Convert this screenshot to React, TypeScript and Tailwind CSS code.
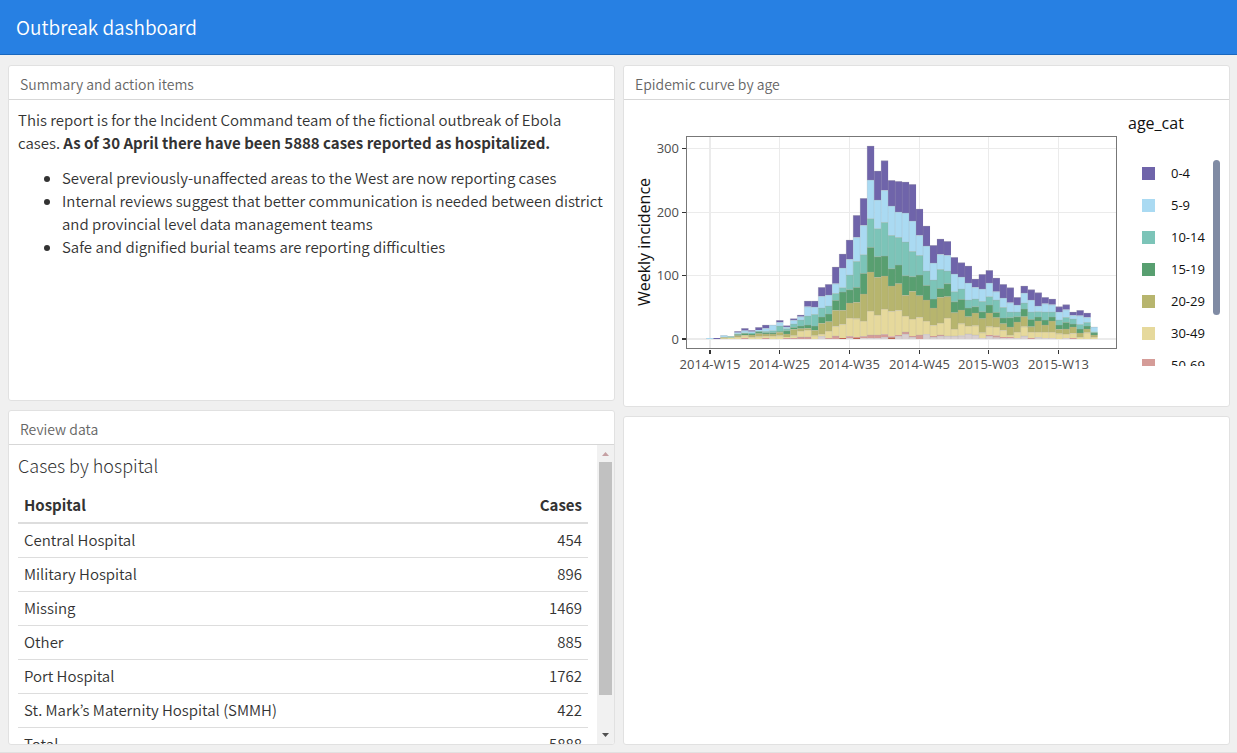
import type { ReactNode } from "react";

const hospitals: [string, number][] = [
  ["Central Hospital", 454],
  ["Military Hospital", 896],
  ["Missing", 1469],
  ["Other", 885],
  ["Port Hospital", 1762],
  ["St. Mark’s Maternity Hospital (SMMH)", 422],
  ["Total", 5888],
];

const GREY = "#d8cfd0";
const PINK = "#d59c98";
const RUST = "#bf6350";

const legend: [string, string][] = [
  ["0-4", "bg-[#6f64aa]"],
  ["5-9", "bg-[#aadaf2]"],
  ["10-14", "bg-[#7cc4b8]"],
  ["15-19", "bg-[#589f70]"],
  ["20-29", "bg-[#b7b56e]"],
  ["30-49", "bg-[#e6d99c]"],
  ["50-69", "bg-[#d59c98]"],
];

const layers = ["#6f64aa", "#aadaf2", "#7cc4b8", "#589f70", "#b7b56e", "#e6d99c"];

// One row per week: upper edge of each age group, then the oldest groups.
// Edges are in thirds of a unit, measured downwards; BASE is zero cases.
const BASE = 627;
type Week = { e: number[]; old?: [number, string][] };
const weeks: Week[] = [
  { e: [624, 624, 627] },
  { e: [624] },
  { e: [616, 616, 621, 622, 622, 626] },
  { e: [619, 619, 619, 623, 623, 624] },
  { e: [604, 608, 611, 613, 617, 621] },
  { e: [595, 602, 608, 610, 615, 617], old: [[624, PINK]] },
  { e: [601, 605, 609, 612, 615, 621] },
  { e: [592, 600, 603, 605, 611, 620] },
  { e: [585, 595, 604, 608, 612, 618], old: [[624, PINK]] },
  { e: [585, 585, 602, 608, 612, 618] },
  { e: [571, 577, 588, 604, 607, 617] },
  { e: [587, 591, 596, 602, 612, 621], old: [[624, PINK]] },
  { e: [566, 571, 582, 592, 598, 617], old: [[624, PINK]] },
  { e: [555, 560, 570, 588, 596, 603], old: [[621, PINK]] },
  { e: [513, 530, 558, 585, 595, 600], old: [[621, PINK]] },
  { e: [513, 531, 553, 588, 601, 617] },
  { e: [472, 499, 534, 561, 580, 612], old: [[619, GREY]] },
  { e: [463, 495, 528, 552, 575, 603], old: [[624, PINK]] },
  { e: [411, 461, 490, 511, 541, 589], old: [[618, PINK]] },
  { e: [372, 414, 473, 486, 541, 583], old: [[624, RUST]] },
  { e: [330, 388, 435, 479, 519, 564], old: [[619, PINK], [624, GREY]] },
  { e: [256, 322, 394, 472, 517, 566], old: [[621, PINK], [624, RUST]] },
  { e: [205, 286, 374, 430, 492, 573], old: [[619, PINK], [625, GREY]] },
  { e: [48, 150, 266, 352, 426, 543], old: [[615, PINK], [624, GREY]] },
  { e: [123, 210, 296, 380, 442, 555], old: [[615, PINK], [624, GREY]] },
  { e: [92, 181, 277, 378, 438, 537], old: [[613, PINK], [622, GREY]] },
  { e: [151, 228, 316, 416, 468, 544], old: [[619, PINK], [622, RUST]] },
  { e: [154, 246, 322, 405, 461, 541], old: [[615, PINK], [618, GREY]] },
  { e: [156, 249, 336, 437, 496, 558], old: [[606, PINK], [612, GREY]] },
  { e: [163, 273, 364, 440, 484, 567], old: [[618, PINK], [621, GREY]] },
  { e: [237, 316, 376, 435, 497, 562], old: [[615, PINK]] },
  { e: [288, 348, 423, 466, 510, 573], old: [[613, GREY]] },
  { e: [346, 399, 450, 507, 534, 586], old: [[618, PINK], [621, GREY]] },
  { e: [327, 373, 418, 475, 502, 579], old: [[615, PINK], [619, GREY]] },
  { e: [334, 376, 423, 461, 500, 564], old: [[618, GREY]] },
  { e: [382, 432, 485, 515, 548, 597], old: [[618, GREY]] },
  { e: [398, 441, 477, 508, 540, 581], old: [[617, GREY]] },
  { e: [408, 459, 510, 534, 560, 588], old: [[612, GREY]] },
  { e: [447, 472, 507, 530, 549, 587], old: [[615, GREY]] },
  { e: [433, 477, 514, 545, 566, 608], old: [[624, GREY]] },
  { e: [421, 459, 500, 525, 549, 590], old: [[615, PINK], [618, GREY]] },
  { e: [444, 485, 510, 547, 563, 591], old: [[617, PINK], [623, GREY]] },
  { e: [463, 504, 532, 564, 581, 601], old: [[621, PINK], [624, GREY]] },
  { e: [473, 518, 546, 563, 591, 615], old: [[621, PINK], [624, GREY]] },
  { e: [502, 525, 546, 560, 576, 606], old: [[624, GREY]] },
  { e: [468, 489, 519, 537, 560, 590], old: [[618, GREY]] },
  { e: [479, 510, 546, 568, 590, 606], old: [[624, PINK]] },
  { e: [488, 528, 545, 561, 573, 606], old: [[622, GREY]] },
  { e: [502, 521, 546, 570, 585, 606], old: [[624, GREY]] },
  { e: [507, 524, 546, 561, 573, 606], old: [[624, GREY]] },
  { e: [530, 546, 570, 585, 598, 611] },
  { e: [524, 539, 562, 577, 597, 612], old: [[624, GREY]] },
  { e: [546, 556, 567, 582, 591, 610], old: [[624, PINK]] },
  { e: [541, 557, 583, 597, 609, 621] },
  { e: [549, 562, 577, 588, 597, 608] },
  { e: [591, 591, 605, 608, 615, 621] },
];

const BAR = 6.985;
const LEFT = 82.5;
const TOP = 30;

function EpiBars() {
  return (
    <g>
      {weeks.map((week, i) => {
        const x = LEFT + i * BAR;
        const bands: [number, string][] = [
          ...week.e.map((y, k): [number, string] => [y, layers[k]]),
          ...(week.old ?? []),
        ];
        return bands.map(([y, fill], k) => {
          const next = k + 1 < bands.length ? bands[k + 1][0] : BASE;
          const h = (next - y) / 3;
          if (h <= 0) return null;
          return (
            <g key={`${i}-${k}`}>
              <rect x={x} y={TOP + y / 3} width={BAR} height={h} fill={fill} />
              {h > 1 && (
                <path
                  d={`M${x} ${TOP + y / 3 + 0.2}h${BAR}`}
                  stroke="#a9a9a9"
                  strokeOpacity={0.45}
                  strokeWidth={0.7}
                />
              )}
              <path
                d={`M${x} ${TOP + y / 3}v${h}`}
                stroke="#909090"
                strokeOpacity={0.3}
                strokeWidth={0.6}
              />
            </g>
          );
        });
      })}
    </g>
  );
}

const xTicks: [number, string][] = [
  [86, "2014-W15"],
  [155.5, "2014-W25"],
  [225.5, "2014-W35"],
  [295.5, "2014-W45"],
  [364.5, "2015-W03"],
  [434.5, "2015-W13"],
];
const yTicks: [number, string][] = [
  [48.5, "300"],
  [112.5, "200"],
  [175.5, "100"],
  [239, "0"],
];

function EpiCurve() {
  return (
    <svg
      viewBox="0 0 494 290"
      className="h-[290px] w-[494px] shrink-0"
      fontFamily="'Open Sans', sans-serif"
      role="img"
      aria-label="Weekly incidence by age category"
    >
      {xTicks.map(([x, label], i) => (
        <g key={label}>
          <path d={`M${x} 37V248`} stroke="#ebebeb" strokeWidth={i === 0 ? 2 : 1} />
          <path d={`M${x} 250v4`} stroke="#333" strokeWidth={i === 0 ? 2 : 1} />
          <text x={x} y={269} fontSize={13} fill="#4d4d4d" textAnchor="middle">
            {label}
          </text>
        </g>
      ))}
      {yTicks.map(([y, label], i) => (
        <g key={label}>
          <path d={`M63 ${y}H492`} stroke="#ebebeb" strokeWidth={i === 3 ? 2 : 1} />
          <path d={`M58 ${y}h4`} stroke="#333" strokeWidth={i === 3 ? 2 : 1} />
          <text x={55} y={y + 4.5} fontSize={13} fill="#4d4d4d" textAnchor="end">
            {label}
          </text>
        </g>
      ))}
      <EpiBars />
      <rect x={62.5} y={36.5} width={430} height={212} fill="none" stroke="#777" />
      <text
        transform="translate(26 142) rotate(-90)"
        fontSize={16}
        fill="#111"
        textAnchor="middle"
      >
        Weekly incidence
      </text>
    </svg>
  );
}

function Card({
  title,
  className,
  children,
}: {
  title?: string;
  className: string;
  children?: ReactNode;
}) {
  return (
    <section
      className={`flex min-h-0 flex-col overflow-hidden rounded-[3px] border border-[#e1e1e1] bg-white ${className}`}
    >
      {title && (
        <h2 className="h-[34px] shrink-0 border-b border-[#d7d7d7] px-[11px] pt-1 text-[14px] leading-[28px] text-[#666]">
          {title}
        </h2>
      )}
      {children}
    </section>
  );
}

export default function App() {
  return (
    <div className="flex h-screen flex-col border-b border-[#e1e1e1] bg-[#f0f0f0] font-['Noto_Sans_CJK_KR',sans-serif] text-[15px] leading-[23px] font-[350] text-[#333]">
      <header className="h-[55px] shrink-0 border-b border-[#1967be] bg-[#2780e3] px-4">
        <h1 className="text-[19px] leading-[54px] font-[350] text-white">Outbreak dashboard</h1>
      </header>

      <main className="flex min-h-0 flex-1 gap-2 pt-[10px] pr-[7px] pb-[7px] pl-2">
        <div className="flex min-w-0 flex-1 flex-col gap-[9px]">
          <Card title="Summary and action items" className="flex-[336]">
            <div className="px-[9px] pt-2">
              <p>
                This report is for the Incident Command team of the fictional outbreak of Ebola
                cases.{" "}
                <strong className="font-bold">
                  As of 30 April there have been 5888 cases reported as hospitalized.
                </strong>
              </p>
              <ul className="mt-3 list-disc pl-11">
                <li>Several previously-unaffected areas to the West are now reporting cases</li>
                <li>
                  Internal reviews suggest that better communication is needed between district and
                  provincial level data management teams
                </li>
                <li>Safe and dignified burial teams are reporting difficulties</li>
              </ul>
            </div>
          </Card>

          <Card title="Review data" className="flex-[335]">
            <div className="flex min-h-0 flex-1">
              <div className="min-w-0 flex-1 overflow-hidden pr-[9px] pl-[9px]">
                <h3 className="pt-[10px] text-[18px] leading-[21px] font-light">
                  Cases by hospital
                </h3>
                <table className="mt-3 w-full">
                  <thead>
                    <tr className="h-[35px] border-b-2 border-[#ddd]">
                      <th className="px-1.5 pb-0.5 text-left font-bold">Hospital</th>
                      <th className="px-1.5 pb-0.5 text-right font-bold">Cases</th>
                    </tr>
                  </thead>
                  <tbody>
                    {hospitals.map(([name, cases]) => (
                      <tr key={name} className="h-[34px] border-b border-[#ddd]">
                        <td className="px-1.5 pb-0.5">{name}</td>
                        <td className="px-1.5 pb-0.5 text-right">{cases}</td>
                      </tr>
                    ))}
                  </tbody>
                </table>
              </div>
              <div
                className="flex w-[17px] shrink-0 flex-col items-center bg-[#f1f1f1]"
                aria-hidden="true"
              >
                <svg viewBox="0 0 17 17" className="size-[17px] shrink-0">
                  <path d="M5 11h7L8.500 7z" fill="#c5a0a3" />
                </svg>
                <div className="w-[13px] flex-1 bg-[#c1c1c1]" />
                <div className="h-8 shrink-0" />
                <svg viewBox="0 0 17 17" className="size-[17px] shrink-0">
                  <path d="M5 6h7L8.500 10z" fill="#505050" />
                </svg>
              </div>
            </div>
          </Card>
        </div>

        <div className="flex min-w-0 flex-1 flex-col gap-[9px]">
          <Card title="Epidemic curve by age" className="flex-[342]">
            <div className="flex min-h-0 flex-1 justify-between font-['Open_Sans',sans-serif] font-normal">
              <EpiCurve />
              <div className="w-[101px] shrink-0">
                <p className="pt-3 text-[16px] leading-[23px] text-[#111]">age_cat</p>
                <div className="mt-[25px] flex h-[206px] overflow-hidden">
                  <ul className="-mt-[3px] flex-1 pl-[14px]">
                    {legend.map(([label, swatch]) => (
                      <li
                        key={label}
                        className="flex h-8 items-center gap-4 text-[13px] leading-4 text-[#111]"
                      >
                        <span className={`size-[13px] shrink-0 ${swatch}`} />
                        {label}
                      </li>
                    ))}
                  </ul>
                  <div className="mr-[9px] h-[155px] w-[7px] rounded-full bg-[#808ba4]" />
                </div>
              </div>
            </div>
          </Card>
          <Card className="flex-[329]" />
        </div>
      </main>
    </div>
  );
}
